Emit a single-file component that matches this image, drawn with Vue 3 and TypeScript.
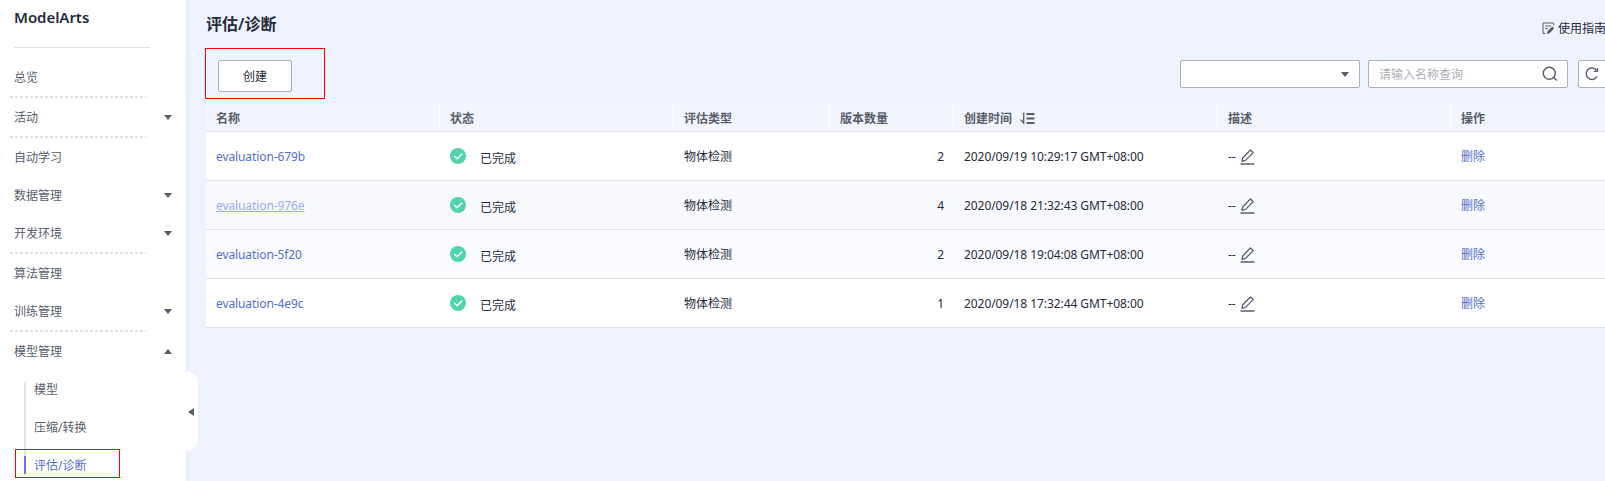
<script setup lang="ts">
interface MenuItem {
  label: string
  caret?: 'up' | 'down'
  divider?: boolean
}

interface Evaluation {
  name: string
  type: string
  versions: number
  created: string
  state?: 'visited' | 'soft'
}

const menu: MenuItem[] = [
  { label: '总览', divider: true },
  { label: '活动', caret: 'down', divider: true },
  { label: '自动学习' },
  { label: '数据管理', caret: 'down' },
  { label: '开发环境', caret: 'down', divider: true },
  { label: '算法管理' },
  { label: '训练管理', caret: 'down', divider: true },
  { label: '模型管理', caret: 'up' },
]

const subMenu: string[] = ['模型', '压缩/转换', '评估/诊断']
const activeSub = '评估/诊断'

const columns: string[] = ['名称', '状态', '评估类型', '版本数量', '创建时间', '描述', '操作']

const rows: Evaluation[] = [
  { name: 'evaluation-679b', type: '物体检测', versions: 2, created: '2020/09/19 10:29:17 GMT+08:00' },
  { name: 'evaluation-976e', type: '物体检测', versions: 4, created: '2020/09/18 21:32:43 GMT+08:00', state: 'visited' },
  { name: 'evaluation-5f20', type: '物体检测', versions: 2, created: '2020/09/18 19:04:08 GMT+08:00', state: 'soft' },
  { name: 'evaluation-4e9c', type: '物体检测', versions: 1, created: '2020/09/18 17:32:44 GMT+08:00' },
]
</script>

<template>
  <div class="page">
    <aside class="sidebar">
      <div class="brand">ModelArts</div>
      <nav class="menu">
        <template v-for="item in menu" :key="item.label">
          <div class="menu-item">
            <span>{{ item.label }}</span>
            <i v-if="item.caret" class="caret" :class="item.caret"></i>
          </div>
          <div v-if="item.divider" class="divider"></div>
        </template>
        <div class="submenu">
          <div v-for="s in subMenu" :key="s" class="sub-item" :class="{ active: s === activeSub }">
            <span>{{ s }}</span>
          </div>
          <div class="sub-mark"></div>
        </div>
      </nav>
      <div class="collapse"><i></i></div>
    </aside>

    <main class="main">
      <header class="head">
        <h1>评估/诊断</h1>
        <a class="guide">
          <svg width="13" height="13" viewBox="0 0 13 13" fill="none" stroke="#575d6c">
            <path d="M11.5 3.4V1H1v10.5h2.4" />
            <path d="M3.2 4h5.6M3.2 6.5h2.6" />
            <path d="M4.8 11.9l.8-3 4.6-4.4 2 2-4.4 4.5z" fill="#575d6c" stroke="none" />
          </svg>
          <span>使用指南</span>
        </a>
      </header>

      <div class="toolbar">
        <div class="highlight"><button class="create">创建</button></div>
        <div class="filters">
          <div class="select"><i class="caret down"></i></div>
          <div class="search">
            <span>请输入名称查询</span>
            <svg width="16" height="16" viewBox="0 0 16 16" fill="none" stroke="#575d6c" stroke-width="1.4">
              <circle cx="7.3" cy="7.2" r="6" />
              <path d="M11.4 11.2L15 14.6" />
            </svg>
          </div>
          <div class="refresh">
            <svg width="14" height="14" viewBox="0 0 14 14" fill="none" stroke="#575d6c" stroke-width="1.4">
              <path d="M11.7 3.6A5.7 5.7 0 1 0 12 9.3" />
              <path d="M12.4 1v3.4H8.8" />
            </svg>
          </div>
        </div>
      </div>

      <div class="table">
        <div class="tr th">
          <div v-for="c in columns" :key="c" class="td">
            <span>{{ c }}</span>
            <svg v-if="c === '创建时间'" class="sort" width="15" height="13" viewBox="0 0 15 13" fill="none" stroke="#575d6c">
              <path d="M.6 7.6L3.7 11V.8" stroke-width="1.3" />
              <path d="M6.5 2h8M6.5 6.5h8M6.5 11h8" stroke-width="1.8" />
            </svg>
          </div>
        </div>
        <div v-for="r in rows" :key="r.name" class="tr" :class="r.state">
          <div class="td"><a class="name">{{ r.name }}</a></div>
          <div class="td status">
            <svg width="16" height="16" viewBox="0 0 16 16">
              <circle cx="8" cy="8" r="8" fill="#50d4ab" />
              <path d="M4.2 8l2.9 2.8 5-5" fill="none" stroke="#fff" stroke-width="1.5" />
            </svg>
            <span>已完成</span>
          </div>
          <div class="td">{{ r.type }}</div>
          <div class="td num">{{ r.versions }}</div>
          <div class="td date">{{ r.created }}</div>
          <div class="td desc">
            <span>--</span>
            <svg width="15" height="16" viewBox="0 0 15 16" fill="none" stroke="#575d6c">
              <path d="M2 12.4l.8-3.7L10.4 1l2.8 2.6-7.7 7.8z" stroke-width="1.3" stroke-linejoin="round" />
              <path d="M.5 15h14" stroke-width="1.5" />
            </svg>
          </div>
          <div class="td"><a>删除</a></div>
        </div>
      </div>
    </main>
  </div>
</template>

<style scoped>
* {
  box-sizing: border-box;
}
.page {
  display: flex;
  width: 1605px;
  height: 481px;
  overflow: hidden;
  background: #eef2ff;
  color: #252b3a;
  font: 12px/18px "Noto Sans", "Noto Sans CJK SC", sans-serif;
}
.sidebar {
  position: relative;
  flex: none;
  width: 186px;
  height: 481px;
  background: #fff;
  color: #575d6c;
  box-shadow: 0 0 4px rgba(60, 90, 170, 0.12);
}
.brand {
  width: 136px;
  height: 48px;
  margin-left: 14px;
  padding-top: 6px;
  border-bottom: 1px solid #dfe1e6;
  color: #252b3a;
  font-size: 15px;
  font-weight: 600;
  line-height: 22px;
  letter-spacing: -0.05px;
}
.menu {
  padding-top: 10px;
}
.menu-item {
  display: flex;
  align-items: center;
  justify-content: space-between;
  height: 38px;
  padding: 2px 14px 0;
}
.caret {
  border: 4px solid transparent;
}
.menu-item .caret {
  margin-top: -2px;
}
.caret.down {
  border-top: 5px solid #575d6c;
  border-bottom: 0;
}
.caret.up {
  border-bottom: 5px solid #575d6c;
  border-top: 0;
}
.divider {
  width: 136px;
  height: 2px;
  margin-left: 10px;
  background: repeating-linear-gradient(90deg, #dfe1e6 0 3px, transparent 3px 5px);
}
.submenu {
  position: relative;
}
.sub-item {
  display: flex;
  align-items: center;
  height: 38px;
  padding: 2px 0 0 34px;
  position: relative;
}
.sub-item::before {
  content: "";
  position: absolute;
  left: 24px;
  top: 0;
  width: 2px;
  height: 38px;
  background: #dfe1e6;
}
.sub-item:first-child::before {
  top: 12px;
  height: 26px;
}
.sub-item.active {
  color: #526ecc;
}
.sub-item.active::before {
  height: 10px;
}
.sub-item.active::after {
  content: "";
  position: absolute;
  left: 24px;
  top: 10px;
  width: 2px;
  height: 18px;
  background: #5e7ce0;
}
.sub-mark {
  position: absolute;
  left: 15px;
  top: 79px;
  width: 105px;
  height: 29px;
  border: 1px solid #f00;
}
.collapse {
  position: absolute;
  left: 186px;
  top: 371px;
  width: 12px;
  height: 80px;
  padding: 37px 0 0 2px;
  border-radius: 0 12px 12px 0;
  background: #fff;
}
.collapse i {
  display: block;
  width: 0;
  border: 4px solid transparent;
  border-left: 0;
  border-right: 6px solid #575d6c;
}
.main {
  flex: none;
  width: 1419px;
  padding-left: 20px;
}
.head {
  display: flex;
  justify-content: space-between;
  height: 48px;
}
h1 {
  margin: 12px 0 0;
  font-size: 16px;
  font-weight: 600;
  line-height: 24px;
}
.guide {
  display: flex;
  align-items: center;
  gap: 3px;
  width: 63px;
  height: 18px;
  margin-top: 19px;
  white-space: nowrap;
}
.guide svg {
  flex: none;
}
.guide span {
  padding-top: 2px;
}
.toolbar {
  display: flex;
  justify-content: space-between;
  height: 55px;
}
.highlight {
  width: 120px;
  height: 51px;
  margin-left: -1px;
  padding: 11px 0 0 12px;
  border: 1px solid #f00;
}
.create {
  display: block;
  width: 74px;
  height: 32px;
  padding: 2px 0 0;
  border: 1px solid #adb0b8;
  border-radius: 2px;
  background: #fff;
  color: #252b3a;
  font: inherit;
}
.filters {
  display: flex;
  width: 425px;
  padding-top: 12px;
}
.filters > div {
  display: flex;
  flex: none;
  align-items: center;
  height: 28px;
  border: 1px solid #adb0b8;
  border-radius: 2px;
  background: #fff;
}
.filters .select {
  justify-content: flex-end;
  width: 180px;
  padding-right: 10px;
}
.filters .search {
  justify-content: space-between;
  width: 200px;
  margin-left: 8px;
  padding: 0 9px 0 10px;
  color: #adb0b8;
}
.search span {
  padding-top: 2px;
}
.filters .refresh {
  width: 40px;
  margin-left: 10px;
  padding-left: 6px;
}
.table {
  width: 1399px;
}
.tr {
  display: grid;
  grid-template-columns: 234px 234px 156px 124px 264px 233px 154px;
  height: 49px;
  border-bottom: 1px solid #dfe1e6;
  background: #fff;
}
.tr.th {
  height: 29px;
  background: #f2f5fc;
  color: #575d6c;
  font-weight: 700;
}
.tr.visited {
  background: #f8f9fd;
}
.tr.soft {
  background: #fafbff;
}
.td {
  display: flex;
  align-items: center;
  padding: 2px 10px 0;
  white-space: nowrap;
}
.th .td {
  padding-top: 3px;
  border-right: 1px solid #fff;
}
.th .td:last-child {
  border-right: 0;
}
.td a {
  color: #526ecc;
}
.td .name {
  letter-spacing: -0.1px;
}
.date {
  letter-spacing: -0.07px;
}
.visited .name {
  color: #96adfa;
  text-decoration: underline;
}
.sort {
  margin-left: 8px;
}
.status svg {
  flex: none;
  margin-top: -2px;
}
.status span {
  margin: 4px 0 0 14px;
}
.td.num {
  justify-content: flex-end;
}
.desc svg {
  margin-left: 4px;
}
</style>

<style>
body {
  margin: 0;
  overflow: hidden;
}
</style>
